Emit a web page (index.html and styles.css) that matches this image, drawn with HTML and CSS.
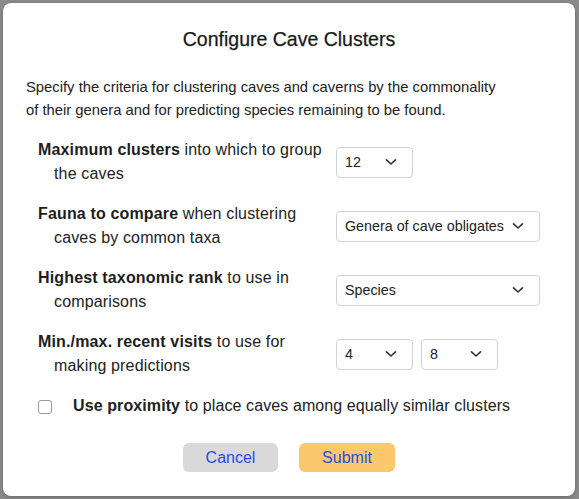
FILE: index.html
```html
<!DOCTYPE html>
<html>
<head>
<meta charset="utf-8">
<link rel="stylesheet" href="styles.css">
</head>
<body>
<div class="backdrop">
  <div class="modal">
    <h1 class="title">Configure Cave Clusters</h1>
    <p class="desc">Specify the criteria for clustering caves and caverns by the commonality of their genera and for predicting species remaining to be found.</p>
    <div class="form">
      <div class="label"><b>Maximum clusters</b> into which to group the caves</div>
      <div class="controls">
        <div class="select narrow"><span>12</span><svg class="chev" viewBox="0 0 12 8"><path d="M1.5 1.8 L6 6 L10.5 1.8"/></svg></div>
      </div>
      <div class="label"><b>Fauna to compare</b> when clustering caves by common taxa</div>
      <div class="controls">
        <div class="select wide"><span>Genera of cave obligates</span><svg class="chev" viewBox="0 0 12 8"><path d="M1.5 1.8 L6 6 L10.5 1.8"/></svg></div>
      </div>
      <div class="label"><b>Highest taxonomic rank</b> to use in comparisons</div>
      <div class="controls">
        <div class="select wide"><span>Species</span><svg class="chev" viewBox="0 0 12 8"><path d="M1.5 1.8 L6 6 L10.5 1.8"/></svg></div>
      </div>
      <div class="label"><b>Min./max. recent visits</b> to use for making predictions</div>
      <div class="controls">
        <div class="select narrow"><span>4</span><svg class="chev" viewBox="0 0 12 8"><path d="M1.5 1.8 L6 6 L10.5 1.8"/></svg></div>
        <div class="select narrow"><span>8</span><svg class="chev" viewBox="0 0 12 8"><path d="M1.5 1.8 L6 6 L10.5 1.8"/></svg></div>
      </div>
    </div>
    <label class="check"><span class="box"></span><span><b>Use proximity</b> to place caves among equally similar clusters</span></label>
    <div class="buttons">
      <button class="btn cancel">Cancel</button>
      <button class="btn submit">Submit</button>
    </div>
  </div>
</div>
</body>
</html>
```

FILE: styles.css
```css
html, body {
  margin: 0;
  padding: 0;
}
body {
  font-family: "Liberation Sans", Arial, sans-serif;
  color: #222;
  background: #8a8a8a;
}
.backdrop {
  width: 579px;
  height: 499px;
  padding: 3px 4px 3px 3px;
  box-sizing: border-box;
  background: #8b8b8b;
}
.modal {
  background: #fff;
  border-radius: 8px;
  height: 493px;
  box-sizing: border-box;
  padding: 25px 23px 0 23px;
  box-shadow: 0 1px 4px rgba(0,0,0,0.25);
}
.title {
  margin: 0;
  font-size: 19.5px;
  font-weight: 400;
  line-height: 22px;
  text-align: center;
  color: #1a1a1a;
  -webkit-text-stroke: 0.25px #1a1a1a;
}
.desc {
  margin: 26px 0 0 0;
  max-width: 476px;
  font-size: 14.8px;
  line-height: 23px;
  color: #222;
}
.form {
  margin: 16px 0 0 12px;
  display: grid;
  grid-template-columns: 288px auto;
  column-gap: 10px;
  row-gap: 16px;
  align-items: center;
}
.label {
  font-size: 16px;
  line-height: 24px;
  padding-left: 16px;
  text-indent: -16px;
  color: #222;
  letter-spacing: 0.15px;
}
.label b {
  color: #1e1e1e;
}
.controls {
  display: flex;
  gap: 8px;
}
.select {
  height: 31px;
  box-sizing: border-box;
  border: 1px solid #cfd3d8;
  border-radius: 4px;
  display: flex;
  align-items: center;
  justify-content: space-between;
  padding: 0 15px 0 8px;
  font-size: 14.3px;
  color: #222;
  background: #fff;
  overflow: hidden;
  white-space: nowrap;
}
.select.narrow { width: 77px; }
.select.wide { width: 204px; }
.select span {
  overflow: hidden;
}
.chev {
  width: 12px;
  height: 8px;
  flex: none;
  margin-left: 6px;
}
.chev path {
  fill: none;
  stroke: #333;
  stroke-width: 1.6;
  stroke-linecap: round;
  stroke-linejoin: round;
}
.check {
  display: flex;
  align-items: center;
  margin: 16px 0 0 12px;
  font-size: 16px;
  line-height: 24px;
  gap: 21px;
  letter-spacing: 0.1px;
}
.box {
  width: 14px;
  height: 14px;
  box-sizing: border-box;
  border: 1px solid #9a9a9a;
  border-radius: 3px;
  flex: none;
  margin-top: 1px;
}
.buttons {
  display: flex;
  justify-content: center;
  gap: 21px;
  margin-top: 25px;
}
.btn {
  font-family: "Liberation Sans", Arial, sans-serif;
  font-size: 16px;
  height: 29px;
  border: none;
  border-radius: 6px;
  color: #1d4ee6;
  padding: 0;
}
.cancel {
  width: 95px;
  background: #d9d9d9;
}
.submit {
  width: 96px;
  background: #fcc86e;
}
```
